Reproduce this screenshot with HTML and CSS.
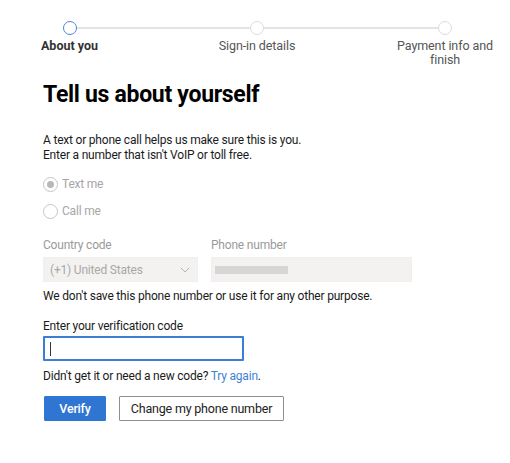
FILE: index.html
```html
<!DOCTYPE html>
<html>
<head>
<meta charset="utf-8">
<link rel="stylesheet" href="styles.css">
</head>
<body>
<div class="page">
  <div class="stepper">
    <div class="step step-1 active">
      <span class="dot"></span>
      <span class="step-label">About you</span>
    </div>
    <div class="step step-2">
      <span class="dot"></span>
      <span class="step-label">Sign-in details</span>
    </div>
    <div class="step step-3">
      <span class="dot"></span>
      <span class="step-label">Payment info and finish</span>
    </div>
  </div>

  <h1 class="title">Tell us about yourself</h1>

  <p class="intro">A text or phone call helps us make sure this is you.<br>Enter a number that isn't VoIP or toll free.</p>

  <div class="radios">
    <label class="radio"><span class="radio-circle checked"></span><span>Text me</span></label>
    <label class="radio"><span class="radio-circle"></span><span>Call me</span></label>
  </div>

  <div class="fields">
    <div class="field field-country">
      <div class="field-label">Country code</div>
      <div class="box select">
        <span>(+1) United States</span>
        <svg class="chev" width="10" height="6" viewBox="0 0 10 6"><path d="M0.8 0.8 L5 5 L9.2 0.8" fill="none" stroke="#b4b4b4" stroke-width="1"/></svg>
      </div>
    </div>
    <div class="field field-phone">
      <div class="field-label">Phone number</div>
      <div class="box phone"><span class="blur"></span></div>
    </div>
  </div>

  <p class="note">We don't save this phone number or use it for any other purpose.</p>

  <div class="code-label">Enter your verification code</div>
  <div class="code-input"><span class="caret"></span></div>

  <p class="retry">Didn't get it or need a new code? <a class="link">Try again</a>.</p>

  <div class="actions">
    <button class="btn btn-primary">Verify</button>
    <button class="btn btn-secondary">Change my phone number</button>
  </div>
</div>
</body>
</html>
```

FILE: styles.css
```css
* { box-sizing: border-box; }
html, body { margin: 0; padding: 0; background: #fff; }
body {
  font-family: "Roboto", "Noto Sans", sans-serif;
  font-size: 12px;
  letter-spacing: -0.2px;
  color: #1b1b1b;
}
.page { padding: 21px 0 0 43px; }

.stepper {
  display: flex;
  position: relative;
  margin-left: -1px;
}
.stepper::before {
  content: "";
  position: absolute;
  left: 27px;
  width: 376px;
  top: 6px;
  height: 2px;
  background: #e4e4e4;
}
.step {
  display: flex;
  flex-direction: column;
  align-items: center;
  position: relative;
}
.step-1 { width: 55px; }
.step-2 { width: 150px; margin-left: 85px; }
.step-3 { width: 104px; margin-left: 61px; }
.dot {
  width: 14px;
  height: 14px;
  border-radius: 50%;
  border: 1.5px solid #dcdcdc;
  background: #fff;
}
.active .dot { border-color: #4d87d6; }
.step-label {
  margin-top: 4px;
  font-size: 12.5px;
  letter-spacing: -0.1px;
  line-height: 14px;
  color: #555;
  text-align: center;
}
.active .step-label { font-weight: 700; color: #333; white-space: nowrap; letter-spacing: 0; }

.title {
  margin: 13px 0 0;
  font-size: 23px;
  line-height: 30px;
  font-weight: 700;
  color: #000;
  letter-spacing: -0.3px;
}

.intro {
  margin: 23px 0 0;
  line-height: 15px;
  color: #1b1b1b;
}

.radios { margin-top: 13px; display: flex; flex-direction: column; gap: 11px; }
.radio {
  display: flex;
  align-items: center;
  gap: 4px;
  color: #a6a6a6;
  height: 16px;
}
.radio-circle {
  width: 15px;
  height: 15px;
  border-radius: 50%;
  border: 1px solid #c6c6c6;
  position: relative;
  flex: none;
}
.radio-circle.checked::after {
  content: "";
  position: absolute;
  left: 3px; top: 3px;
  width: 7px; height: 7px;
  border-radius: 50%;
  background: #b8b8b8;
}

.fields { display: flex; gap: 13px; margin-top: 19px; }
.field-label { color: #9a9a9a; line-height: 15px; }
.box {
  margin-top: 4px;
  height: 25px;
  background: #f3f2f1;
  border: 1px solid #f0efee;
  display: flex;
  align-items: center;
  padding: 0 6px;
  color: #a8a8a8;
}
.select { width: 155px; justify-content: space-between; padding-right: 7px; }
.phone { width: 201px; padding-left: 3px; }
.blur {
  display: block;
  width: 73px;
  height: 8px;
  background: #d6d6d6;
  filter: blur(0.5px);
}

.note { margin: 7px 0 0; line-height: 15px; }

.code-label { margin-top: 15px; line-height: 15px; }
.code-input {
  margin-top: 2px;
  width: 201px;
  height: 25px;
  border: 2px solid #3b7fd5;
  border-radius: 1px;
  display: flex;
  align-items: center;
  padding-left: 5px;
}
.caret { width: 1px; height: 14px; background: #333; }

.retry { margin: 8px 0 0; line-height: 15px; }
.link { color: #3f82d6; text-decoration: none; }

.actions { display: flex; gap: 13px; margin-top: 12px; }
.btn {
  font-family: inherit;
  font-size: 12.5px;
  letter-spacing: -0.2px;
  height: 25px;
  padding: 0;
  border-radius: 1px;
  cursor: pointer;
}
.btn-primary {
  width: 62px;
  margin-left: 1px;
  background: #2f75d2;
  border: 1px solid #2f75d2;
  color: #fff;
  font-weight: 500;
}
.btn-secondary {
  width: 165px;
  background: #fff;
  border: 1px solid #8f8f8f;
  color: #222;
  font-weight: 400;
}
```
